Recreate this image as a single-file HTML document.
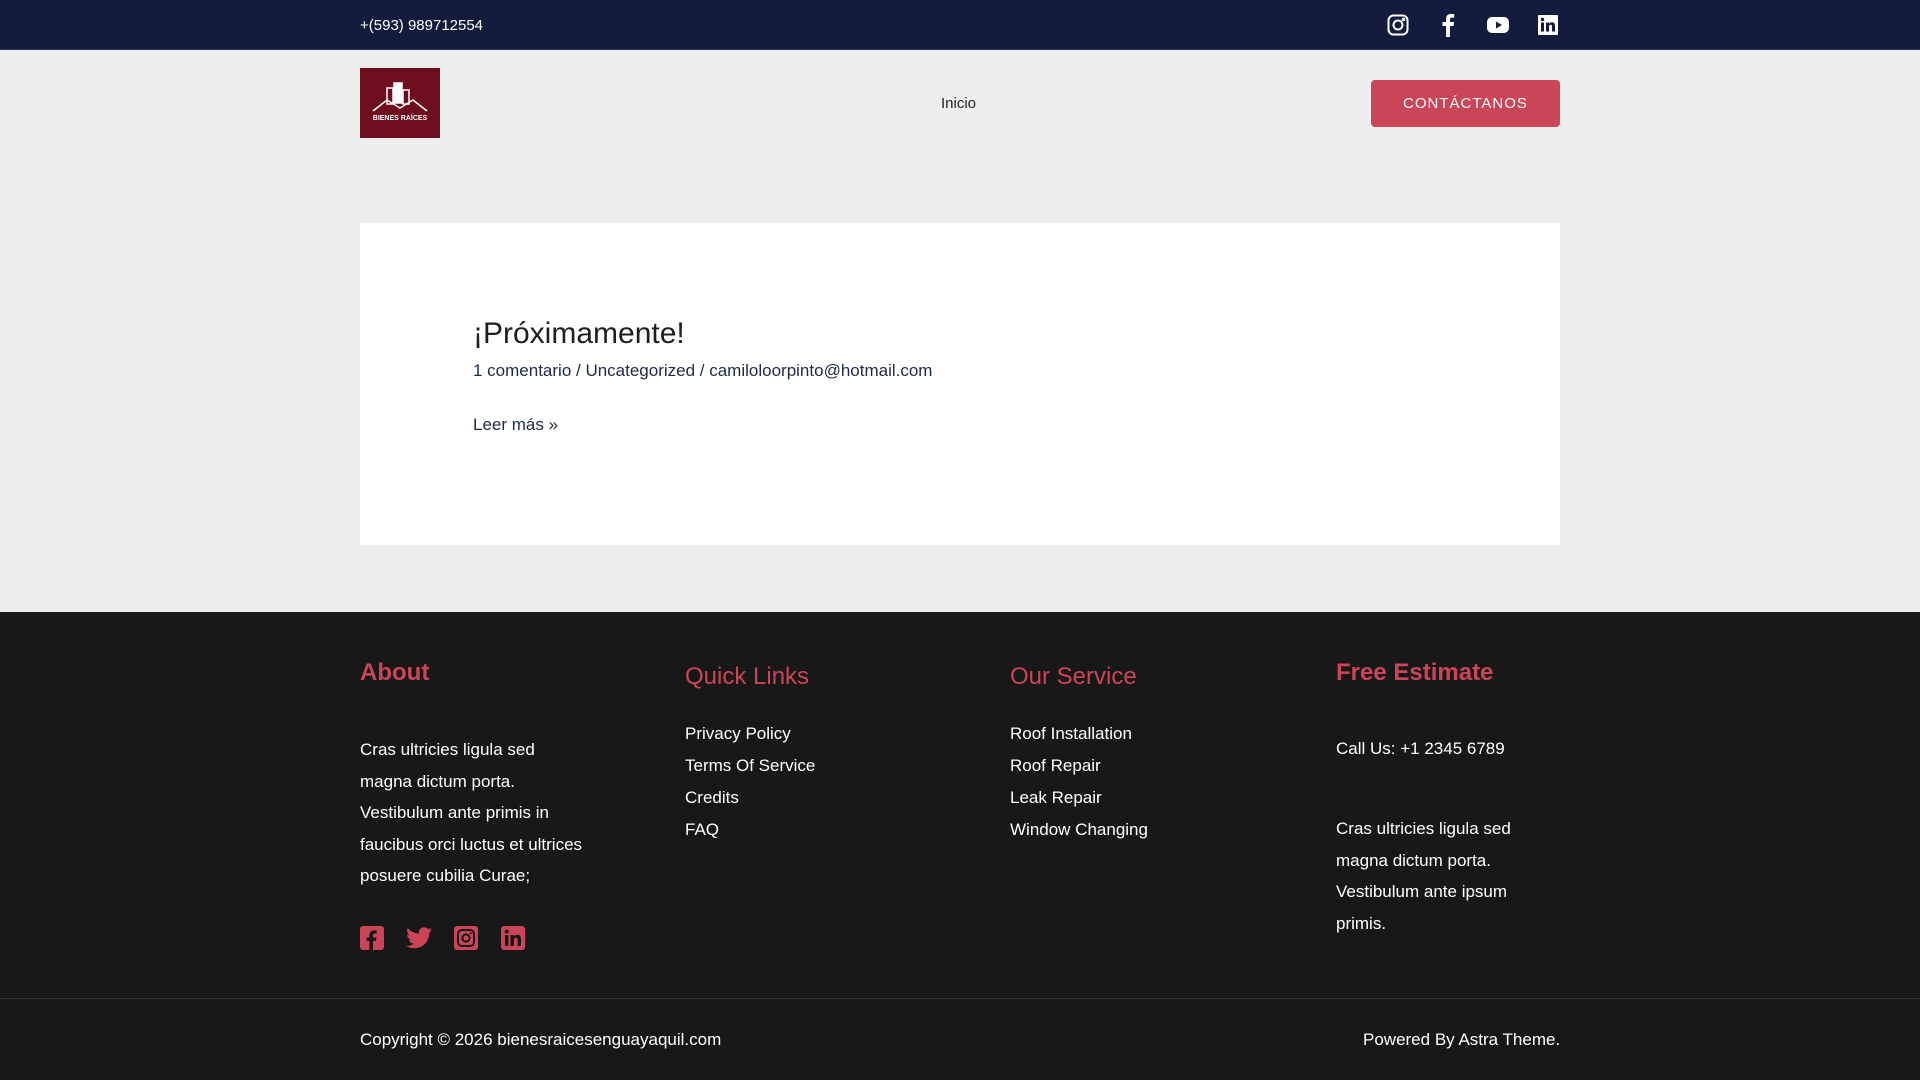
<!DOCTYPE html>
<html><head><meta charset="utf-8">
<style>
*{margin:0;padding:0;box-sizing:border-box}
body{width:1920px;height:1080px;overflow:hidden;background:#eeeeee;font-family:"Liberation Sans",sans-serif;position:relative}
.a{position:absolute;white-space:nowrap}
.top{position:absolute;left:0;top:0;width:1920px;height:50px;background:#131c3c;border-bottom:1px solid #2b3350}
.foot{position:absolute;left:0;top:612px;width:1920px;height:468px;background:#181818}
.h{color:#cc4458;font-size:24px}
.w{color:#fff;font-size:17px}
</style></head><body>
<div class="top"></div>
<div class="a" style="left:360px;top:17px;color:#fff;font-size:15px">+(593) 989712554</div>
<svg class="a" style="left:1387px;top:14px" width="22" height="22" viewBox="0 0 22 22" fill="none" stroke="#fff" stroke-width="2"><rect x="1.5" y="1.5" width="19" height="19" rx="5"/><circle cx="11" cy="11" r="4.5"/><circle cx="16.5" cy="5.5" r=".8" fill="#fff"/></svg>
<svg class="a" style="left:1441px;top:13px" width="14" height="24" viewBox="0 0 14 24" fill="#fff"><path d="M9 24V13h3.5l.5-4H9V6.5C9 5.4 9.4 4.6 11 4.6h2.2V1.1C12.8 1 11.5.9 10.1.9 7 .9 5 2.8 5 6.2V9H1.5v4H5v11z"/></svg>
<svg class="a" style="left:1487px;top:16px" width="22" height="18" viewBox="0 0 22 18"><rect x="0" y="1" width="22" height="16" rx="5" fill="#fff"/><path d="M9 5.5v7l6-3.5z" fill="#131c3c"/></svg>
<svg class="a" style="left:1538px;top:15px" width="20" height="20" viewBox="0 0 20 20"><rect width="20" height="20" rx="1" fill="#fff"/><rect x="3" y="7.5" width="3" height="9" fill="#131c3c"/><circle cx="4.5" cy="4.5" r="1.7" fill="#131c3c"/><path d="M8 7.5h3v1.4c.6-1 1.7-1.6 3-1.6 2.3 0 3 1.4 3 3.7v5.5h-3v-5c0-1.1-.3-1.8-1.3-1.8S11 10.5 11 11.6v4.9H8z" fill="#131c3c"/></svg>

<div class="a" style="left:360px;top:68px;width:80px;height:70px;background:#6e0d1e"></div>
<svg class="a" style="left:360px;top:68px" width="80" height="70" viewBox="0 0 80 70" fill="none" stroke="#fff" stroke-width="1.5"><path d="M13 43l14-11 13 8 13-8 14 11"/><rect x="27" y="20" width="6" height="16"/><rect x="34" y="15" width="8" height="20" fill="#fff"/><rect x="43" y="22" width="6" height="14"/><text x="40" y="52" fill="#fff" stroke="none" font-size="7" font-weight="bold" text-anchor="middle" font-family="Liberation Sans">BIENES RAÍCES</text></svg>
<div class="a" style="left:941px;top:95px;font-size:15px;color:#222">Inicio</div>
<div class="a" style="left:1371px;top:80px;width:189px;height:47px;background:#cb4458;border-radius:4px;color:#fff;font-size:15px;letter-spacing:1px;text-align:center;line-height:48px">CONTÁCTANOS</div>

<div class="a" style="left:360px;top:223px;width:1200px;height:322px;background:#fff"></div>
<div class="a" style="left:473px;top:317px;font-size:30px;color:#1e1e1e">¡Próximamente!</div>
<div class="a" style="left:473px;top:361px;font-size:17px;color:#1e2a4a">1 comentario / Uncategorized / camiloloorpinto@hotmail.com</div>
<div class="a" style="left:473px;top:415px;font-size:17px;color:#1e2a4a">Leer más »</div>

<div class="foot"></div>
<div class="a h" style="left:360px;top:659px;font-weight:bold">About</div>
<div class="a h" style="left:685px;top:663px">Quick Links</div>
<div class="a h" style="left:1010px;top:663px">Our Service</div>
<div class="a h" style="left:1336px;top:659px;font-weight:bold">Free Estimate</div>
<div class="a w" style="left:360px;top:734px;line-height:31.5px;white-space:normal;width:228px">Cras ultricies ligula sed magna dictum porta. Vestibulum ante primis in faucibus orci luctus et ultrices posuere cubilia Curae;</div>
<div class="a w" style="left:685px;top:718px;line-height:32px">Privacy Policy<br>Terms Of Service<br>Credits<br>FAQ</div>
<div class="a w" style="left:1010px;top:718px;line-height:32px">Roof Installation<br>Roof Repair<br>Leak Repair<br>Window Changing</div>
<div class="a w" style="left:1336px;top:739px">Call Us: +1 2345 6789</div>
<div class="a w" style="left:1336px;top:813px;line-height:31.5px;white-space:normal;width:200px">Cras ultricies ligula sed magna dictum porta. Vestibulum ante ipsum primis.</div>
<svg class="a" style="left:360px;top:926px" width="24" height="24" viewBox="0 0 24 24"><rect width="24" height="24" rx="3" fill="#cc4458"/><path d="M13 24v-9h3l.5-3.5H13V9.3c0-1 .3-1.7 1.8-1.7h1.9V4.5c-.3 0-1.5-.1-2.8-.1-2.8 0-4.5 1.7-4.5 4.7v2.4H6.5V15h2.9v9z" fill="#181818"/></svg>
<svg class="a" style="left:406px;top:927px" width="26" height="22" viewBox="0 0 24 20"><path d="M24 2.4c-.9.4-1.8.7-2.8.8 1-.6 1.800-1.6 2.2-2.7-1 .6-2 1-3.1 1.2A4.9 4.9 0 0 0 11.9 6 14 14 0 0 1 1.7.9a4.9 4.9 0 0 0 1.5 6.6c-.8 0-1.6-.3-2.2-.6 0 2.4 1.7 4.4 3.9 4.8-.7.2-1.5.2-2.2.1.6 2 2.4 3.4 4.6 3.4A9.9 9.9 0 0 1 0 17.3 14 14 0 0 0 7.5 19.5c9 0 14-7.5 14-14v-.6c1-.7 1.800-1.6 2.5-2.5z" fill="#cc4458"/></svg>
<svg class="a" style="left:454px;top:926px" width="24" height="24" viewBox="0 0 24 24"><rect width="24" height="24" rx="3" fill="#cc4458"/><rect x="4" y="4" width="16" height="16" rx="4" fill="none" stroke="#181818" stroke-width="2"/><circle cx="12" cy="12" r="3.6" fill="none" stroke="#181818" stroke-width="2"/><circle cx="16.7" cy="7.3" r="1" fill="#181818"/></svg>
<svg class="a" style="left:501px;top:926px" width="24" height="24" viewBox="0 0 24 24"><rect width="24" height="24" rx="3" fill="#cc4458"/><rect x="4" y="9" width="3.4" height="11" fill="#181818"/><circle cx="5.7" cy="5.6" r="2" fill="#181818"/><path d="M9.5 9h3.3v1.5c.6-1 1.8-1.8 3.5-1.8 2.7 0 3.7 1.6 3.7 4.5V20h-3.4v-6c0-1.3-.3-2.300-1.6-2.300s-2 1-2 2.4V20H9.5z" fill="#181818"/></svg>
<div class="a" style="left:0;top:998px;width:1920px;height:1px;background:#333"></div>
<div class="a w" style="left:360px;top:1030px">Copyright © 2026 bienesraicesenguayaquil.com</div>
<div class="a w" style="left:1363px;top:1030px">Powered By Astra Theme.</div>
</body></html>
